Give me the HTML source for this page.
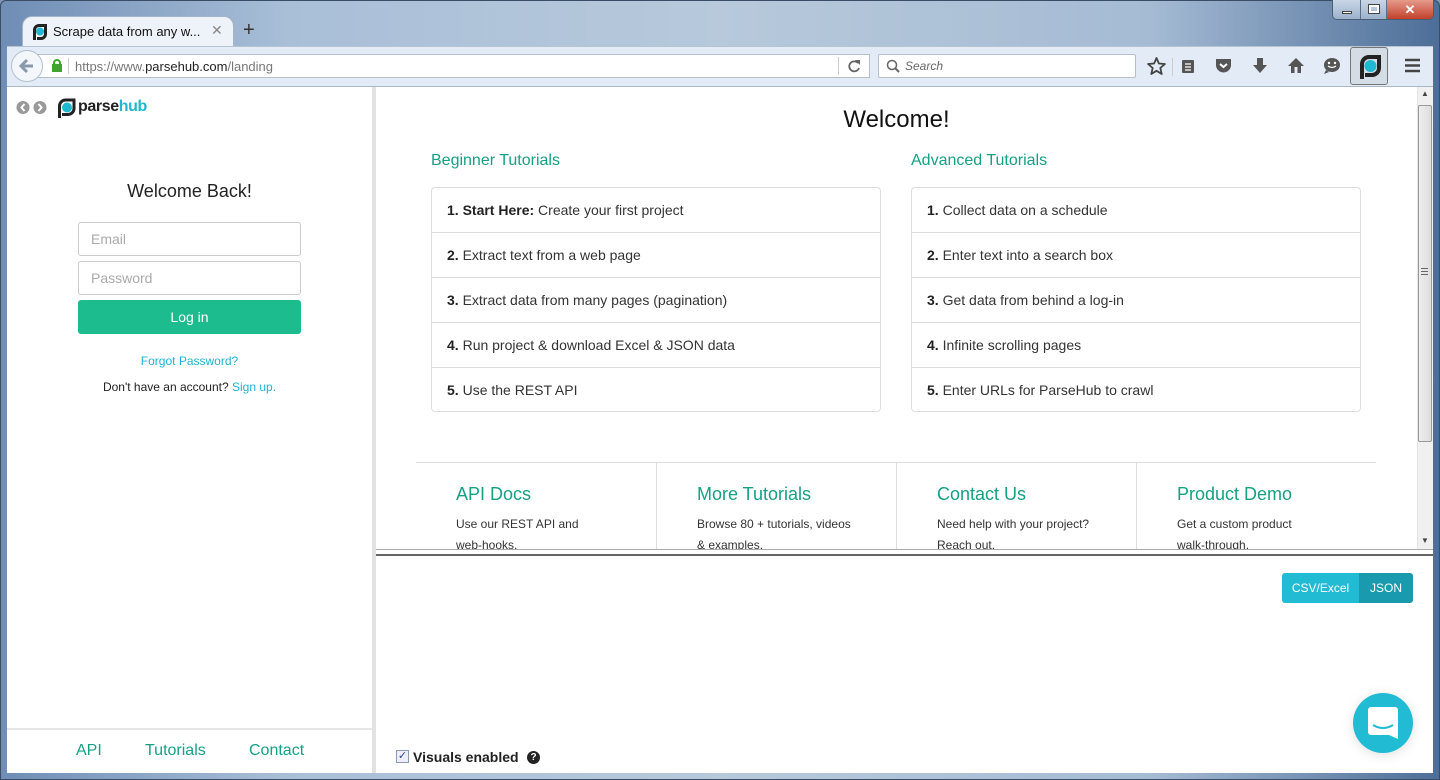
<!DOCTYPE html>
<html><head><meta charset="utf-8"><style>
*{box-sizing:border-box;margin:0;padding:0}
body{width:1440px;height:780px;overflow:hidden;position:relative;font-family:"Liberation Sans",Arial,sans-serif;background:linear-gradient(180deg,#7d96b8 0,#a8bcd4 40px,#9fb4cf 100%);}
.abs{position:absolute}
.frame{left:0;top:0;width:1440px;height:780px;background:linear-gradient(90deg,#6f8db5,#a9bfd8 20%,#b7c9db 50%,#a5bbd4 80%,#4d6e98);border:1px solid #3a4d66;border-radius:6px 6px 0 0}
.tab{left:22px;top:16px;width:212px;height:32px;background:#eef3f9;border:1px solid #a4b4c6;border-bottom:none;border-radius:10px 10px 0 0}
.nav{left:7px;top:46px;width:1426px;height:41px;background:#e3ecf6;border-top:1px solid #b7c4d2;border-bottom:1px solid #a9b8c8}
.url{left:66px;top:54px;width:804px;height:24px;background:#fff;border:1px solid #b3bfcc;border-left:none}
.search{left:878px;top:54px;width:258px;height:24px;background:#fff;border:1px solid #b3bfcc;border-radius:2px}
.back{left:11px;top:50px;width:32px;height:32px;border-radius:50%;background:#f3f6fa;border:1px solid #b3bfcc}
.content{left:7px;top:87px;width:1426px;height:686px;background:#fff}
.left{left:7px;top:87px;width:365px;height:686px;background:#fff}
.div{left:372px;top:87px;width:4px;height:686px;background:#e2e2e2}
.inp{left:78px;width:223px;height:34px;border:1px solid #ccc;border-radius:3px;color:#aaa;font-size:14px;padding:8px 12px}
.btn{left:78px;top:300px;width:223px;height:34px;background:#1dbc8e;border-radius:3px;color:#fff;font-size:14px;text-align:center;line-height:34px}
.green{color:#16a085}
.list{border:1px solid #ddd;border-radius:4px;width:450px}
.list div{height:45px;line-height:44px;border-bottom:1px solid #ddd;padding-left:15px;font-size:14px;color:#333}
.list div:last-child{border-bottom:none;height:43px}
.list b{font-weight:bold;color:#222}
.card h3{font-weight:normal;font-size:18px;color:#16a085;margin-bottom:9px}
.card p{font-size:12px;color:#333;line-height:21px}
</style></head><body>
<div class="abs frame"></div>
<div class="abs" style="left:1332px;top:0;width:102px;height:20px;border:1px solid #4a5d77;border-top:none;border-radius:0 0 5px 5px;overflow:hidden;display:flex">
<div style="width:28px;background:linear-gradient(#c9d6e6,#9cb1cc);border-right:1px solid #5b6f88;position:relative"><div class="abs" style="left:9px;top:11px;width:10px;height:3px;background:#fff;border:1px solid #444"></div></div>
<div style="width:26px;background:linear-gradient(#c9d6e6,#9cb1cc);border-right:1px solid #5b6f88;position:relative"><div class="abs" style="left:8px;top:5px;width:10px;height:8px;border:2px solid #fff;outline:1px solid #444"></div></div>
<div style="flex:1;background:linear-gradient(#e59b8c,#c2402b);color:#fff;font-weight:bold;font-size:13px;text-align:center;line-height:19px">✕</div>
</div>
<div class="abs tab"></div>
<svg class="abs" style="left:31px;top:24px" width="16" height="16"><path d="M2 16V6a6 6 0 0 1 6-6h8v10a6 6 0 0 1-6 6H6v-3h4a3 3 0 0 0 3-3V3H8a3 3 0 0 0-3 3v10z" fill="#222"/><circle cx="9" cy="7.5" r="4" fill="#1fb7d1"/></svg>
<div class="abs" style="left:53px;top:24px;font-size:13px;color:#111">Scrape data from any w...</div>
<div class="abs" style="left:211px;top:22px;font-size:14px;color:#888">✕</div>
<div class="abs" style="left:243px;top:19px;font-size:20px;color:#333">+</div>
<div class="abs nav"></div>
<div class="abs url"></div>
<div class="abs" style="left:30px;top:54px;width:40px;height:24px;background:#fff;border:1px solid #b3bfcc;border-right:none"></div>
<div class="abs back"></div>
<svg class="abs" style="left:18px;top:57px" width="18" height="18"><path d="M9 3L3 9l6 6M3 9h12" stroke="#8a99aa" stroke-width="3" fill="none"/></svg>
<svg class="abs" style="left:51px;top:59px" width="12" height="13"><rect x="1" y="5" width="10" height="8" fill="#3fa52e"/><path d="M3 6V4a3 3 0 0 1 6 0v2" stroke="#3fa52e" stroke-width="2" fill="none"/></svg>
<div class="abs" style="left:68px;top:58px;width:1px;height:16px;background:#ccc"></div>
<div class="abs" style="left:75px;top:59px;font-size:13px;color:#777">https://www.<span style="color:#222">parsehub.com</span>/landing</div>
<div class="abs" style="left:838px;top:57px;width:1px;height:18px;background:#ccc"></div>
<svg class="abs" style="left:847px;top:59px" width="14" height="14"><path d="M11 4A5 5 0 1 0 12 9" stroke="#666" stroke-width="1.8" fill="none"/><path d="M8 1h5v5z" fill="#666"/></svg>
<div class="abs search"></div>
<svg class="abs" style="left:886px;top:59px" width="14" height="14"><circle cx="6" cy="6" r="4.5" stroke="#666" stroke-width="1.5" fill="none"/><path d="M9 9l4 4" stroke="#666" stroke-width="2"/></svg>
<div class="abs" style="left:905px;top:59px;font-size:12px;color:#666;font-style:italic">Search</div>
<svg class="abs" style="left:1147px;top:57px" width="19" height="18"><path d="M9.5 1l2.4 5.5 6 .5-4.6 4 1.4 6-5.2-3.2-5.2 3.2 1.4-6L1.1 7l6-.5z" stroke="#444" stroke-width="1.8" fill="none" stroke-linejoin="round"/></svg>
<div class="abs" style="left:1172px;top:58px;width:1px;height:18px;background:#ccc"></div>
<svg class="abs" style="left:1180px;top:58px" width="16" height="16"><rect x="2" y="2" width="12" height="13" rx="1" fill="#555"/><path d="M5 6h6M5 9h6M5 12h6" stroke="#fff" stroke-width="1.3"/></svg>
<svg class="abs" style="left:1215px;top:58px" width="17" height="15"><path d="M1 1h15v6a7.5 7.5 0 0 1-15 0z" fill="#555"/><path d="M5 6l3.5 3 3.5-3" stroke="#fff" stroke-width="2" fill="none"/></svg>
<svg class="abs" style="left:1252px;top:57px" width="16" height="17"><path d="M5 1h6v7h4l-7 8-7-8h4z" fill="#555"/></svg>
<svg class="abs" style="left:1287px;top:57px" width="18" height="17"><path d="M9 1l8 8h-3v7H4V9H1z" fill="#555"/><rect x="7.5" y="10" width="3" height="6" fill="#e3ecf6"/></svg>
<svg class="abs" style="left:1323px;top:57px" width="18" height="17"><ellipse cx="9" cy="8" rx="8" ry="7" fill="#555"/><path d="M3 13l-2 4 5-2z" fill="#555"/><circle cx="6" cy="6" r="1.2" fill="#fff"/><circle cx="12" cy="6" r="1.2" fill="#fff"/><path d="M5 9q4 3 8 0" stroke="#fff" stroke-width="1.3" fill="none"/></svg>
<div class="abs" style="left:1350px;top:47px;width:38px;height:38px;background:#d4dce6;border:1px solid #777;border-radius:3px"></div>
<svg class="abs" style="left:1358px;top:55px" width="24" height="24"><path d="M2 24V9a9 9 0 0 1 9-9h12v13a9 9 0 0 1-9 9H7v-4h7a5 5 0 0 0 5-5V4h-8a5 5 0 0 0-5 5v15z" fill="#222"/><circle cx="12.5" cy="11" r="6" fill="#1fb7d1"/></svg>
<svg class="abs" style="left:1404px;top:58px" width="17" height="15"><path d="M1 2h15M1 7.5h15M1 13h15" stroke="#444" stroke-width="2.5"/></svg>

<div class="abs content"></div>
<div class="abs left"></div>
<div class="abs div"></div>
<svg class="abs" style="left:16px;top:100px" width="32" height="15"><circle cx="7" cy="7.5" r="6.5" fill="#999"/><path d="M8.5 4l-3 3.5 3 3.5" stroke="#fff" stroke-width="2" fill="none"/><circle cx="24" cy="7.5" r="6.5" fill="#999"/><path d="M22.5 4l3 3.5-3 3.5" stroke="#fff" stroke-width="2" fill="none"/></svg>
<svg class="abs" style="left:57px;top:98px" width="20" height="20"><path d="M1 20V8a7.5 7.5 0 0 1 7.5-7.5h10v10a7.5 7.5 0 0 1-7.5 7.5H5v-3h6a4.5 4.5 0 0 0 4.5-4.5V3.5H8.5A4.5 4.5 0 0 0 4 8v12z" fill="#222"/><circle cx="10" cy="9.5" r="5" fill="#1fb7d1"/></svg>
<div class="abs" style="left:78px;top:98px;font-size:16px;font-weight:bold;color:#222;letter-spacing:-.4px">parse<span style="color:#1fb7d1">hub</span></div>
<div class="abs" style="left:7px;top:181px;width:365px;text-align:center;font-size:18px;color:#222">Welcome Back!</div>
<div class="abs inp" style="top:222px">Email</div>
<div class="abs inp" style="top:261px">Password</div>
<div class="abs btn">Log in</div>
<div class="abs" style="left:7px;top:354px;width:365px;text-align:center;font-size:12px;color:#20b3d1">Forgot Password?</div>
<div class="abs" style="left:7px;top:380px;width:365px;text-align:center;font-size:12px;color:#222">Don't have an account? <span style="color:#20b3d1">Sign up.</span></div>
<div class="abs" style="left:7px;top:728px;width:365px;height:2px;background:#e6e6e6"></div>
<div class="abs green" style="left:76px;top:742px;font-size:16px">API</div>
<div class="abs green" style="left:145px;top:742px;font-size:16px">Tutorials</div>
<div class="abs green" style="left:249px;top:742px;font-size:16px">Contact</div>

<div class="abs" style="left:376px;top:106px;width:1041px;text-align:center;font-size:24px;color:#111">Welcome!</div>
<div class="abs green" style="left:431px;top:152px;font-size:16px">Beginner Tutorials</div>
<div class="abs green" style="left:911px;top:152px;font-size:16px">Advanced Tutorials</div>
<div class="abs list" style="left:431px;top:187px">
<div><b>1. Start Here:</b> Create your first project</div>
<div><b>2.</b> Extract text from a web page</div>
<div><b>3.</b> Extract data from many pages (pagination)</div>
<div><b>4.</b> Run project &amp; download Excel &amp; JSON data</div>
<div><b>5.</b> Use the REST API</div>
</div>
<div class="abs list" style="left:911px;top:187px">
<div><b>1.</b> Collect data on a schedule</div>
<div><b>2.</b> Enter text into a search box</div>
<div><b>3.</b> Get data from behind a log-in</div>
<div><b>4.</b> Infinite scrolling pages</div>
<div><b>5.</b> Enter URLs for ParseHub to crawl</div>
</div>
<div class="abs" style="left:416px;top:462px;width:960px;height:1px;background:#ddd"></div>
<div class="abs" style="left:656px;top:462px;width:1px;height:87px;background:#ddd"></div>
<div class="abs" style="left:896px;top:462px;width:1px;height:87px;background:#ddd"></div>
<div class="abs" style="left:1136px;top:462px;width:1px;height:87px;background:#ddd"></div>
<div class="abs" style="left:376px;top:462px;width:1041px;height:87px;overflow:hidden">
<div class="abs card" style="left:80px;top:22px"><h3>API Docs</h3><p>Use our REST API and<br>web-hooks.</p></div>
<div class="abs card" style="left:321px;top:22px"><h3>More Tutorials</h3><p>Browse 80 + tutorials, videos<br>&amp; examples.</p></div>
<div class="abs card" style="left:561px;top:22px"><h3>Contact Us</h3><p>Need help with your project?<br>Reach out.</p></div>
<div class="abs card" style="left:801px;top:22px"><h3>Product Demo</h3><p>Get a custom product<br>walk-through.</p></div>
</div>
<div class="abs" style="left:1417px;top:87px;width:16px;height:462px;background:#f0f0f0;border-left:1px solid #e4e4e4"></div>
<div class="abs" style="left:1418px;top:105px;width:14px;height:337px;background:linear-gradient(90deg,#eee,#ddd);border:1px solid #999;border-radius:2px"></div>
<div class="abs" style="left:1421px;top:89px;font-size:8px;color:#444">▲</div>
<div class="abs" style="left:1421px;top:536px;font-size:8px;color:#444">▼</div>
<div class="abs" style="left:1421px;top:268px;width:7px;height:7px;border-top:1px solid #666;border-bottom:1px solid #666"><div style="margin-top:2px;height:1px;background:#666"></div></div>
<div class="abs" style="left:376px;top:549px;width:1057px;height:1px;background:#aaa"></div>
<div class="abs" style="left:376px;top:554px;width:1057px;height:2px;background:#666"></div>
<div class="abs" style="left:1282px;top:573px;width:131px;height:30px;border-radius:3px;overflow:hidden;display:flex;font-size:12px;color:#fff;line-height:30px">
<div style="width:77px;background:#21bbd3;text-align:center">CSV/Excel</div>
<div style="flex:1;background:#1a9aaf;text-align:center">JSON</div></div>
<div class="abs" style="left:1353px;top:693px;width:60px;height:60px;border-radius:50%;background:#21bbd3;box-shadow:0 2px 12px rgba(0,0,0,.12)"></div>
<svg class="abs" style="left:1368px;top:707px" width="30" height="32"><path d="M3 0h24a3 3 0 0 1 3 3v29l-9-4H3a3 3 0 0 1-3-3V3a3 3 0 0 1 3-3z" fill="#fff"/><path d="M5 18q10 6 20 0" stroke="#21bbd3" stroke-width="2" fill="none"/></svg>
<div class="abs" style="left:396px;top:750px;width:13px;height:13px;border:1px solid #8a9ab0;background:#eef;font-size:11px;line-height:11px;color:#2a4a9a;text-align:center">✓</div>
<div class="abs" style="left:413px;top:749px;font-size:14px;font-weight:bold;color:#222">Visuals enabled</div>
<div class="abs" style="left:527px;top:751px;width:13px;height:13px;border-radius:50%;background:#222;color:#fff;font-size:10px;font-weight:bold;text-align:center;line-height:13px">?</div>
</body></html>
